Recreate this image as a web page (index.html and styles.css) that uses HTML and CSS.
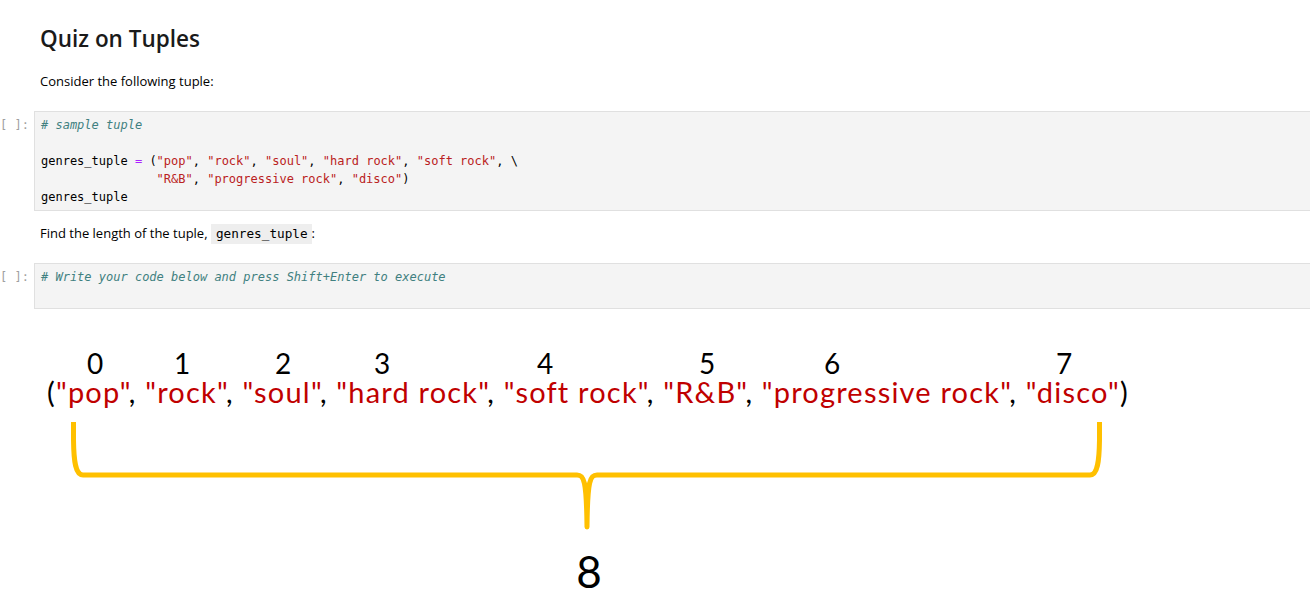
FILE: index.html
```html
<!DOCTYPE html>
<html>
<head>
<meta charset="utf-8">
<title>Quiz on Tuples</title>
<link rel="stylesheet" href="styles.css">
</head>
<body>
<div class="notebook">
  <div class="md-cell">
    <h1 class="title">Quiz on Tuples</h1>
    <p class="para first">Consider the following tuple:</p>
  </div>

  <div class="code-cell">
    <div class="prompt">[ ]:</div>
    <div class="input"><pre class="code"><span class="c"># sample tuple</span>

genres_tuple <span class="o">=</span> (<span class="s">"pop"</span>, <span class="s">"rock"</span>, <span class="s">"soul"</span>, <span class="s">"hard rock"</span>, <span class="s">"soft rock"</span>, \
                <span class="s">"R&amp;B"</span>, <span class="s">"progressive rock"</span>, <span class="s">"disco"</span>)
genres_tuple</pre></div>
  </div>

  <div class="md-cell">
    <p class="para second">Find the length of the tuple, <code class="inline">genres_tuple</code>:</p>
  </div>

  <div class="code-cell">
    <div class="prompt">[ ]:</div>
    <div class="input"><pre class="code"><span class="c"># Write your code below and press Shift+Enter to execute</span>
 </pre></div>
  </div>

  <div class="diagram">
    <span class="idx i0">0</span>
    <span class="idx i1">1</span>
    <span class="idx i2">2</span>
    <span class="idx i3">3</span>
    <span class="idx i4">4</span>
    <span class="idx i5">5</span>
    <span class="idx i6">6</span>
    <span class="idx i7">7</span>
    <div class="tuple">(<span class="str">"pop"</span>, <span class="str">"rock"</span>, <span class="str">"soul"</span>, <span class="str">"hard rock"</span>, <span class="str">"soft rock"</span>, <span class="str">"R&amp;B"</span>, <span class="str">"progressive rock"</span>, <span class="str">"disco"</span>)</div>
    <svg class="brace" width="1310" height="305" viewBox="0 309 1310 305">
      <path d="M73.5 422 L73.5 440 C73.8 462 75.5 475 83 475 L577 475 C584 475 586.5 480 587 527 C587.5 480 590 475 597 475 L1090 475 C1097.5 475 1099.2 462 1099.5 440 L1099.5 422" fill="none" stroke="#FFC000" stroke-width="5" stroke-linejoin="round"/>
    </svg>
    <span class="total">8</span>
  </div>
</div>
</body>
</html>
```

FILE: styles.css
```css
html, body {
  margin: 0;
  padding: 0;
  background: #fff;
}

body {
  overflow: hidden;
  width: 1310px;
  height: 614px;
  font-family: "Open Sans", "Noto Sans", "Liberation Sans", sans-serif;
  color: #000;
}

.notebook {
  padding-top: 25px;
  width: 1312px;
}

.md-cell {
  padding-left: 40px;
}

.title {
  margin: 0;
  font-size: 22.5px;
  line-height: 28px;
  font-weight: 600;
  color: #1a1a1a;
}

.para {
  margin: 0;
  font-size: 13px;
  line-height: 20px;
  color: #000;
}

.para.first {
  margin-top: 18px;
  margin-bottom: 20px;
}

.para.second {
  margin-top: 12px;
  margin-bottom: 19px;
}

.inline {
  font-family: "DejaVu Sans Mono", "Liberation Mono", monospace;
  font-size: 12.7px;
  background: #eeeeee;
  padding: 2px 4px 3px 5px;
}

.code-cell {
  display: flex;
  flex-direction: row;
}

.prompt {
  width: 34px;
  flex: none;
  padding-top: 5px;
  font-family: "DejaVu Sans Mono", "Liberation Mono", monospace;
  font-size: 12px;
  line-height: 18px;
  color: #a0a0a0;
}

.input {
  flex: 1;
  background: #f4f4f4;
  border: 1px solid #e0e0e0;
  padding: 4px 0 4px 6px;
}

.code {
  margin: 0;
  font-family: "DejaVu Sans Mono", "Liberation Mono", monospace;
  font-size: 12px;
  line-height: 18px;
  color: #000;
  white-space: pre;
}

.code .c {
  color: #408080;
  font-style: italic;
}

.code .o {
  color: #aa22ff;
}

.code .s {
  color: #ba2121;
}

.diagram {
  position: relative;
  height: 305px;
  font-family: "Lato", "Open Sans", sans-serif;
  color: #000;
}

.idx {
  position: absolute;
  top: 40px;
  width: 40px;
  margin-left: -20px;
  text-align: center;
  font-size: 28px;
  line-height: 28px;
}

.i0 { left: 95px; }
.i1 { left: 182px; }
.i2 { left: 283px; }
.i3 { left: 382px; }
.i4 { left: 545px; }
.i5 { left: 707px; }
.i6 { left: 832px; }
.i7 { left: 1064px; }

.tuple {
  position: absolute;
  left: 47px;
  top: 68px;
  font-size: 29px;
  line-height: 29px;
  letter-spacing: 1.2px;
  white-space: nowrap;
  color: #000;
}

.tuple .str {
  color: #c00000;
}

.brace {
  position: absolute;
  left: 0;
  top: 0;
}

.total {
  position: absolute;
  left: 569px;
  width: 40px;
  top: 240px;
  text-align: center;
  font-size: 44px;
  line-height: 44px;
}
```
